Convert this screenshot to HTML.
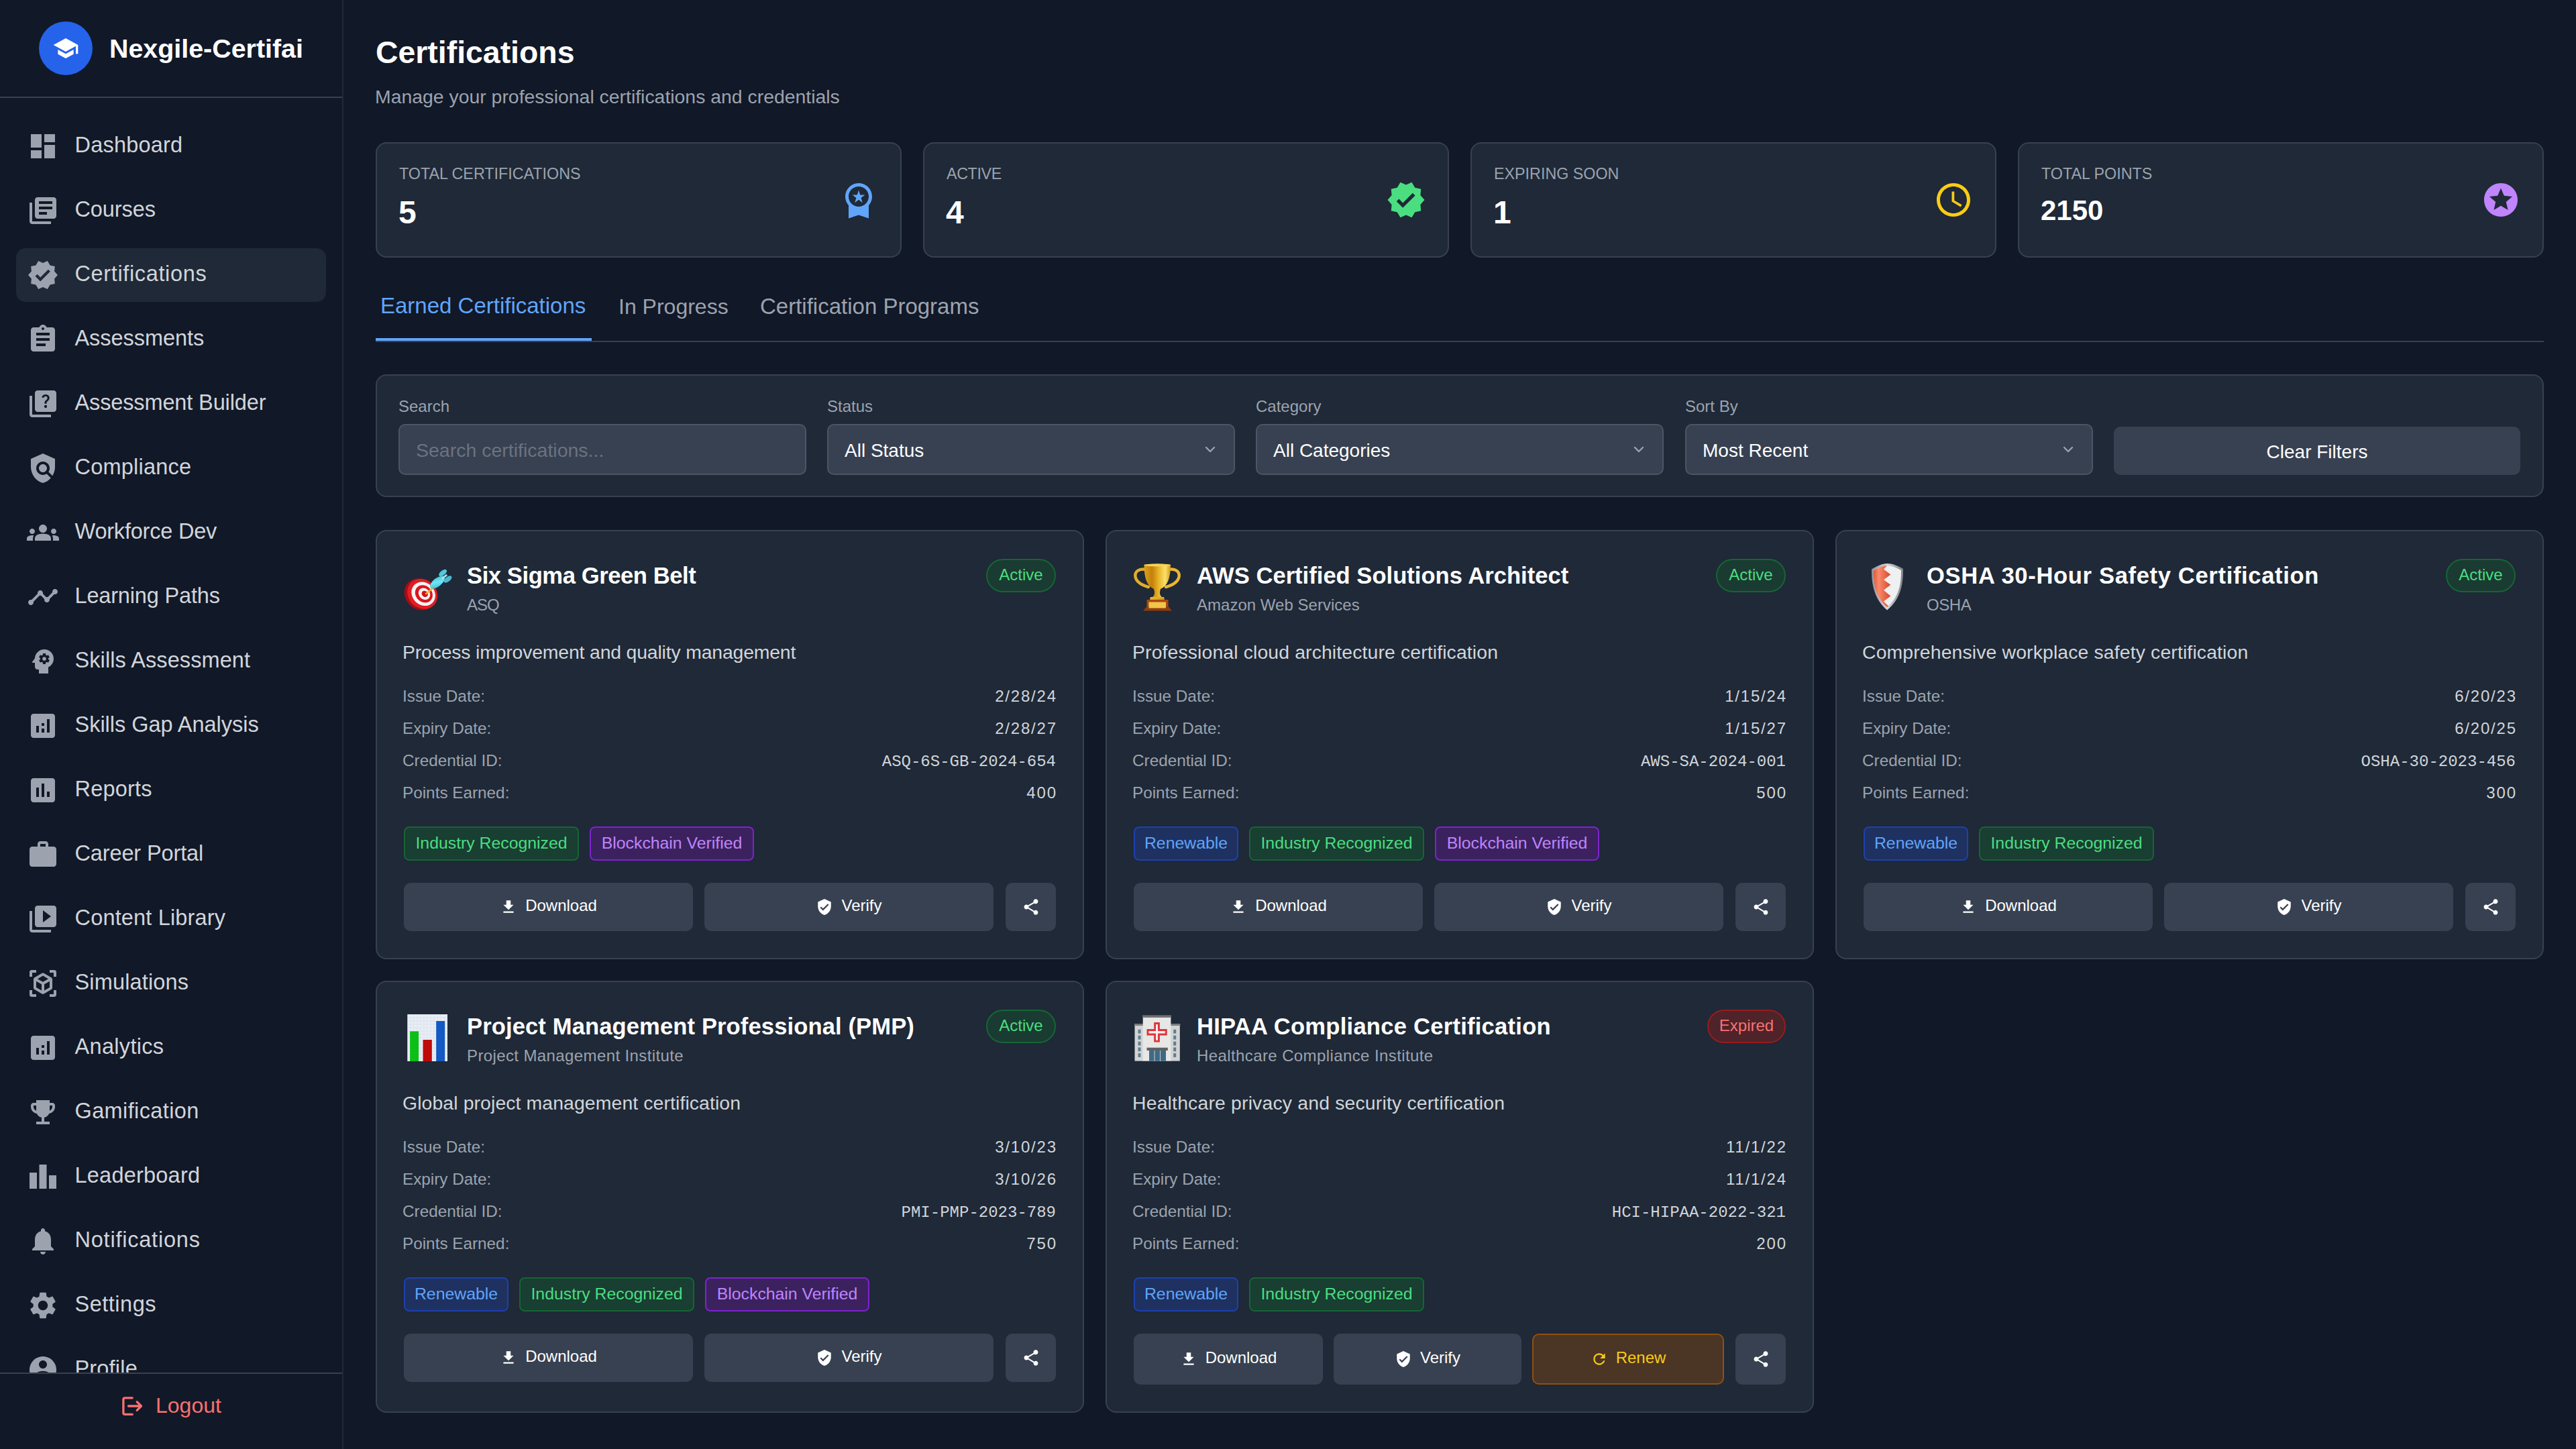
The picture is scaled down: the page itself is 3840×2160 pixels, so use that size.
<!DOCTYPE html>
<html><head><meta charset="utf-8"><title>Certifications</title>
<style>
html,body{margin:0;padding:0;width:3840px;height:2160px;overflow:hidden;background:#111827;}
body{position:relative;font-family:"Liberation Sans",sans-serif;}
.t{position:absolute;white-space:nowrap;}
.mono{font-family:"Liberation Mono",monospace;}
.b{position:absolute;box-sizing:content-box;}
.ic{position:absolute;display:block;}
</style></head><body>
<div class="b" style="left:0px;top:0px;width:510px;height:2160px;background:#111827;border-radius:0px;border-right:2px solid #1f2937;"></div>
<div class="b" style="left:0px;top:144px;width:510px;height:2px;background:#374151;border-radius:0px;"></div>
<div class="b" style="left:58px;top:32px;width:80px;height:80px;background:#2563eb;border-radius:40px;"></div>
<svg class="ic" style="left:78px;top:52px;width:40px;height:40px;" viewBox="0 0 24 24"><path fill="#ffffff" d="M5 13.18v4L12 21l7-3.82v-4L12 17l-7-3.82zM12 3L1 9l11 6 9-4.91V17h2V9L12 3z"/></svg>
<div class="t" style="left:163px;top:47.84px;font-size:39.4px;line-height:49px;color:#ffffff;font-weight:700;">Nexgile-Certifai</div>
<div class="b" style="left:0;top:146px;width:510px;height:1900px;overflow:hidden">
<svg class="ic" style="left:40px;top:48px;width:48px;height:48px;" viewBox="0 0 24 24"><path fill="#9ca3af" d="M3 13h8V3H3v10zm0 8h8v-6H3v6zm10 0h8V11h-8v10zm0-18v6h8V3h-8z"/></svg>
<div class="t" style="left:111.5px;top:50.23px;font-size:32.5px;line-height:41px;color:#d1d5db;letter-spacing:0.2px;">Dashboard</div>
<svg class="ic" style="left:40px;top:144px;width:48px;height:48px;" viewBox="0 0 24 24"><path fill="#9ca3af" d="M4 6H2v14c0 1.1.9 2 2 2h14v-2H4V6zm16-4H8c-1.1 0-2 .9-2 2v12c0 1.1.9 2 2 2h12c1.1 0 2-.9 2-2V4c0-1.1-.9-2-2-2zm-1 9H9V9h10v2zm-4 4H9v-2h6v2zm4-8H9V5h10v2z"/></svg>
<div class="t" style="left:111.5px;top:146.23px;font-size:32.5px;line-height:41px;color:#d1d5db;letter-spacing:-0.1px;">Courses</div>
<div class="b" style="left:24px;top:224px;width:462px;height:80px;background:#1f2937;border-radius:14px;"></div>
<svg class="ic" style="left:40px;top:240px;width:48px;height:48px;" viewBox="0 0 24 24"><path fill="#9ca3af" d="M23 12l-2.44-2.79.34-3.69-3.61-.82-1.89-3.2L12 2.96 8.6 1.5 6.71 4.69 3.1 5.5l.34 3.7L1 12l2.44 2.79-.34 3.7 3.61.82L8.6 22.5l3.4-1.47 3.4 1.46 1.89-3.19 3.61-.82-.34-3.69L23 12zm-12.91 4.72l-3.8-3.81 1.48-1.48 2.32 2.33 5.85-5.87 1.48 1.48-7.33 7.35z"/></svg>
<div class="t" style="left:111.5px;top:242.23px;font-size:32.5px;line-height:41px;color:#d1d5db;letter-spacing:0.64px;">Certifications</div>
<svg class="ic" style="left:40px;top:336px;width:48px;height:48px;" viewBox="0 0 24 24"><path fill="#9ca3af" d="M19 3h-4.18C14.4 1.84 13.3 1 12 1c-1.3 0-2.4.84-2.82 2H5c-1.1 0-2 .9-2 2v14c0 1.1.9 2 2 2h14c1.1 0 2-.9 2-2V5c0-1.1-.9-2-2-2zm-7 0c.55 0 1 .45 1 1s-.45 1-1 1-1-.45-1-1 .45-1 1-1zm2 14H7v-2h7v2zm3-4H7v-2h10v2zm0-4H7V7h10v2z"/></svg>
<div class="t" style="left:111.5px;top:338.23px;font-size:32.5px;line-height:41px;color:#d1d5db;letter-spacing:-0.06px;">Assessments</div>
<svg class="ic" style="left:40px;top:432px;width:48px;height:48px;" viewBox="0 0 24 24"><path fill="#9ca3af" d="M4 6H2v14c0 1.1.9 2 2 2h14v-2H4V6zm16-4H8c-1.1 0-2 .9-2 2v12c0 1.1.9 2 2 2h12c1.1 0 2-.9 2-2V4c0-1.1-.9-2-2-2zm-5.99 13c-.59 0-1.05-.47-1.05-1.05 0-.59.47-1.04 1.05-1.04.59 0 1.04.45 1.04 1.04-.01.58-.45 1.05-1.04 1.05zm2.5-6.17c-.63.93-1.23 1.21-1.56 1.81-.13.24-.18.4-.18 1.18h-1.52c0-.41-.06-1.08.26-1.65.41-.73 1.18-1.16 1.63-1.8.48-.68.21-1.94-1.14-1.94-.88 0-1.32.67-1.5 1.23l-1.37-.57C11.51 5.96 12.52 5 13.99 5c1.23 0 2.08.56 2.51 1.26.37.61.58 1.73.01 2.57z"/></svg>
<div class="t" style="left:111.5px;top:434.23px;font-size:32.5px;line-height:41px;color:#d1d5db;letter-spacing:-0.13px;">Assessment Builder</div>
<svg class="ic" style="left:40px;top:528px;width:48px;height:48px;" viewBox="0 0 24 24"><path fill="#9ca3af" d="M21 5l-9-4-9 4v6c0 5.55 3.84 10.74 9 12 2.3-.56 4.33-1.9 5.88-3.71l-3.12-3.12c-1.94 1.29-4.58 1.07-6.29-.64-1.95-1.95-1.95-5.12 0-7.07 1.95-1.95 5.12-1.95 7.07 0 1.71 1.71 1.92 4.35.64 6.29l2.9 2.9C20.29 15.69 21 13.38 21 11V5zM12 15c1.66 0 3-1.34 3-3s-1.34-3-3-3-3 1.34-3 3 1.34 3 3 3z"/></svg>
<div class="t" style="left:111.5px;top:530.23px;font-size:32.5px;line-height:41px;color:#d1d5db;letter-spacing:0.21px;">Compliance</div>
<svg class="ic" style="left:40px;top:624px;width:48px;height:48px;" viewBox="0 0 24 24"><path fill="#9ca3af" d="M12 12.75c1.63 0 3.07.39 4.24.9 1.08.48 1.76 1.56 1.76 2.73V18H6v-1.61c0-1.18.68-2.26 1.76-2.73 1.17-.52 2.61-.91 4.24-.91zM4 13c1.1 0 2-.9 2-2s-.9-2-2-2-2 .9-2 2 .9 2 2 2zm1.13 1.1c-.37-.06-.74-.1-1.13-.1-.99 0-1.93.21-2.78.58C.48 14.9 0 15.62 0 16.43V18h4.5v-1.61c0-.83.23-1.61.63-2.29zM20 13c1.1 0 2-.9 2-2s-.9-2-2-2-2 .9-2 2 .9 2 2 2zm4 3.43c0-.81-.48-1.53-1.22-1.85-.85-.37-1.79-.58-2.78-.58-.39 0-.76.04-1.13.1.4.68.63 1.46.63 2.29V18H24v-1.57zM12 6c1.66 0 3 1.34 3 3s-1.34 3-3 3-3-1.34-3-3 1.34-3 3-3z"/></svg>
<div class="t" style="left:111.5px;top:626.23px;font-size:32.5px;line-height:41px;color:#d1d5db;letter-spacing:-0.21px;">Workforce Dev</div>
<svg class="ic" style="left:40px;top:720px;width:48px;height:48px;" viewBox="0 0 24 24"><path fill="#9ca3af" d="M23 8c0 1.1-.9 2-2 2-.18 0-.35-.02-.51-.07l-3.56 3.55c.05.16.07.34.07.52 0 1.1-.9 2-2 2s-2-.9-2-2c0-.18.02-.36.07-.52l-2.55-2.55c-.16.05-.34.07-.52.07s-.36-.02-.52-.07l-4.55 4.56c.05.16.07.33.07.51 0 1.1-.9 2-2 2s-2-.9-2-2 .9-2 2-2c.18 0 .35.02.51.07l4.56-4.55C8.02 9.36 8 9.18 8 9c0-1.1.9-2 2-2s2 .9 2 2c0 .18-.02.36-.07.52l2.55 2.55c.16-.05.34-.07.52-.07s.36.02.52.07l3.55-3.56C19.02 8.35 19 8.18 19 8c0-1.1.9-2 2-2s2 .9 2 2z"/></svg>
<div class="t" style="left:111.5px;top:722.23px;font-size:32.5px;line-height:41px;color:#d1d5db;letter-spacing:-0.17px;">Learning Paths</div>
<svg class="ic" style="left:40px;top:816px;width:48px;height:48px;" viewBox="0 0 24 24"><path fill="#9ca3af" d="M13 3C9.23 3 6.19 5.95 6 9.66l-1.92 2.53c-.24.31 0 .81.42.81H6v3c0 1.11.89 2 2 2h1v3h7v-4.69c2.37-1.12 4-3.51 4-6.31 0-3.86-3.12-7-7-7zm3 7c0 .13-.01.26-.02.39l.83.66c.08.06.1.16.05.25l-.8 1.39c-.05.09-.16.12-.24.09l-.99-.4c-.21.16-.43.29-.67.39L14 13.83c-.01.1-.1.17-.2.17h-1.6c-.1 0-.18-.07-.2-.17l-.15-1.06c-.25-.1-.47-.23-.68-.39l-.99.4c-.09.03-.2 0-.25-.09l-.8-1.39c-.05-.08-.03-.19.05-.25l.84-.66c-.01-.13-.02-.26-.02-.39s.02-.27.04-.39l-.85-.66c-.08-.06-.1-.16-.05-.26l.8-1.38c.05-.09.15-.12.24-.09l1 .4c.2-.15.43-.29.67-.39L12 6.17c.02-.1.1-.17.2-.17h1.6c.1 0 .18.07.2.17l.15 1.06c.24.1.46.23.67.39l1-.4c.09-.03.2 0 .24.09l.8 1.38c.05.09.03.2-.05.26l-.85.66c.03.12.04.25.04.39zm-3-1.43c-.79 0-1.43.64-1.43 1.43s.64 1.43 1.43 1.43 1.43-.64 1.43-1.43-.64-1.43-1.43-1.43z"/></svg>
<div class="t" style="left:111.5px;top:818.23px;font-size:32.5px;line-height:41px;color:#d1d5db;letter-spacing:0.09px;">Skills Assessment</div>
<svg class="ic" style="left:40px;top:912px;width:48px;height:48px;" viewBox="0 0 24 24"><path fill="#9ca3af" d="M19 3H5c-1.1 0-2 .9-2 2v14c0 1.1.9 2 2 2h14c1.1 0 2-.9 2-2V5c0-1.1-.9-2-2-2zM9 17H7v-5h2v5zm4 0h-2v-3h2v3zm0-5h-2v-2h2v2zm4 5h-2V7h2v10z"/></svg>
<div class="t" style="left:111.5px;top:914.23px;font-size:32.5px;line-height:41px;color:#d1d5db;letter-spacing:-0.02px;">Skills Gap Analysis</div>
<svg class="ic" style="left:40px;top:1008px;width:48px;height:48px;" viewBox="0 0 24 24"><path fill="#9ca3af" d="M19 3H5c-1.1 0-2 .9-2 2v14c0 1.1.9 2 2 2h14c1.1 0 2-.9 2-2V5c0-1.1-.9-2-2-2zM9 17H7v-7h2v7zm4 0h-2V7h2v10zm4 0h-2v-4h2v4z"/></svg>
<div class="t" style="left:111.5px;top:1010.23px;font-size:32.5px;line-height:41px;color:#d1d5db;letter-spacing:0.22px;">Reports</div>
<svg class="ic" style="left:40px;top:1104px;width:48px;height:48px;" viewBox="0 0 24 24"><path fill="#9ca3af" d="M20 6h-4V4c0-1.11-.89-2-2-2h-4c-1.11 0-2 .89-2 2v2H4c-1.11 0-1.99.89-1.99 2L2 19c0 1.11.89 2 2 2h16c1.11 0 2-.89 2-2V8c0-1.11-.89-2-2-2zm-6 0h-4V4h4v2z"/></svg>
<div class="t" style="left:111.5px;top:1106.23px;font-size:32.5px;line-height:41px;color:#d1d5db;letter-spacing:-0.13px;">Career Portal</div>
<svg class="ic" style="left:40px;top:1200px;width:48px;height:48px;" viewBox="0 0 24 24"><path fill="#9ca3af" d="M4 6H2v14c0 1.1.9 2 2 2h14v-2H4V6zm16-4H8c-1.1 0-2 .9-2 2v12c0 1.1.9 2 2 2h12c1.1 0 2-.9 2-2V4c0-1.1-.9-2-2-2zm-8 12.5v-9l6 4.5-6 4.5z"/></svg>
<div class="t" style="left:111.5px;top:1202.23px;font-size:32.5px;line-height:41px;color:#d1d5db;letter-spacing:0.17px;">Content Library</div>
<svg class="ic" style="left:40px;top:1296px;width:48px;height:48px;" viewBox="0 0 24 24"><path fill="#9ca3af" d="M18.25 7.6l-5.5-3.18c-.46-.27-1.04-.27-1.5 0L5.75 7.6c-.46.27-.75.76-.75 1.3v6.35c0 .54.29 1.03.75 1.3l5.5 3.18c.46.27 1.04.27 1.5 0l5.5-3.18c.46-.27.75-.76.75-1.3V8.9c0-.54-.29-1.03-.75-1.3zM7 14.96v-4.62l4 2.32v4.61l-4-2.31zm5-4.03L8 8.61l4-2.31 4 2.31-4 2.32zm1 6.34v-4.61l4-2.32v4.62l-4 2.31zM7 2H3.5C2.67 2 2 2.67 2 3.5V7h2V4h3V2zm10 0h3.5c.83 0 1.5.67 1.5 1.5V7h-2V4h-3V2zM7 22H3.5c-.83 0-1.5-.67-1.5-1.5V17h2v3h3v2zm10 0h3.5c.83 0 1.5-.67 1.5-1.5V17h-2v3h-3v2z"/></svg>
<div class="t" style="left:111.5px;top:1298.23px;font-size:32.5px;line-height:41px;color:#d1d5db;letter-spacing:0.16px;">Simulations</div>
<svg class="ic" style="left:40px;top:1392px;width:48px;height:48px;" viewBox="0 0 24 24"><path fill="#9ca3af" d="M19 3H5c-1.1 0-2 .9-2 2v14c0 1.1.9 2 2 2h14c1.1 0 2-.9 2-2V5c0-1.1-.9-2-2-2zM9 17H7v-5h2v5zm4 0h-2v-3h2v3zm0-5h-2v-2h2v2zm4 5h-2V7h2v10z"/></svg>
<div class="t" style="left:111.5px;top:1394.23px;font-size:32.5px;line-height:41px;color:#d1d5db;letter-spacing:0.32px;">Analytics</div>
<svg class="ic" style="left:40px;top:1488px;width:48px;height:48px;" viewBox="0 0 24 24"><path fill="#9ca3af" d="M19 5h-2V3H7v2H5c-1.1 0-2 .9-2 2v1c0 2.55 1.92 4.63 4.39 4.94.63 1.5 1.98 2.63 3.61 2.96V19H7v2h10v-2h-4v-3.1c1.63-.33 2.98-1.46 3.61-2.96C19.08 12.63 21 10.55 21 8V7c0-1.1-.9-2-2-2zM5 8V7h2v3.82C5.84 10.4 5 9.3 5 8zm14 0c0 1.3-.84 2.4-2 2.82V7h2v1z"/></svg>
<div class="t" style="left:111.5px;top:1490.23px;font-size:32.5px;line-height:41px;color:#d1d5db;letter-spacing:0.38px;">Gamification</div>
<svg class="ic" style="left:40px;top:1584px;width:48px;height:48px;" viewBox="0 0 24 24"><path fill="#9ca3af" d="M7.5 21H2V9h5.5v12zm7.25-18h-5.5v18h5.5V3zM22 11h-5.5v10H22V11z"/></svg>
<div class="t" style="left:111.5px;top:1586.23px;font-size:32.5px;line-height:41px;color:#d1d5db;letter-spacing:0.22px;">Leaderboard</div>
<svg class="ic" style="left:40px;top:1680px;width:48px;height:48px;" viewBox="0 0 24 24"><path fill="#9ca3af" d="M12 22c1.1 0 2-.9 2-2h-4c0 1.1.89 2 2 2zm6-6v-5c0-3.07-1.64-5.64-4.5-6.32V4c0-.83-.67-1.5-1.5-1.5s-1.5.67-1.5 1.5v.68C7.63 5.36 6 7.92 6 11v5l-2 2v1h16v-1l-2-2z"/></svg>
<div class="t" style="left:111.5px;top:1682.23px;font-size:32.5px;line-height:41px;color:#d1d5db;letter-spacing:0.78px;">Notifications</div>
<svg class="ic" style="left:40px;top:1776px;width:48px;height:48px;" viewBox="0 0 24 24"><path fill="#9ca3af" d="M19.14 12.94c.04-.3.06-.61.06-.94 0-.32-.02-.64-.07-.94l2.03-1.58c.18-.14.23-.41.12-.61l-1.92-3.32c-.12-.22-.37-.29-.59-.22l-2.39.96c-.5-.38-1.03-.7-1.62-.94l-.36-2.54c-.04-.24-.24-.41-.48-.41h-3.84c-.24 0-.43.17-.47.41l-.36 2.54c-.59.24-1.13.57-1.62.94l-2.39-.96c-.22-.08-.47 0-.59.22L2.74 8.87c-.12.21-.08.47.12.61l2.03 1.58c-.05.3-.09.63-.09.94s.02.64.07.94l-2.03 1.58c-.18.14-.23.41-.12.61l1.92 3.32c.12.22.37.29.59.22l2.39-.96c.5.38 1.03.7 1.62.94l.36 2.54c.05.24.24.41.48.41h3.84c.24 0 .44-.17.47-.41l.36-2.54c.59-.24 1.13-.56 1.62-.94l2.39.96c.22.08.47 0 .59-.22l1.92-3.32c.12-.22.07-.47-.12-.61l-2.01-1.58zM12 15.6c-1.98 0-3.6-1.62-3.6-3.6s1.62-3.6 3.6-3.6 3.6 1.62 3.6 3.6-1.62 3.6-3.6 3.6z"/></svg>
<div class="t" style="left:111.5px;top:1778.23px;font-size:32.5px;line-height:41px;color:#d1d5db;letter-spacing:0.51px;">Settings</div>
<svg class="ic" style="left:40px;top:1872px;width:48px;height:48px;" viewBox="0 0 24 24"><path fill="#9ca3af" d="M12 2C6.48 2 2 6.48 2 12s4.48 10 10 10 10-4.48 10-10S17.52 2 12 2zm0 3c1.66 0 3 1.34 3 3s-1.34 3-3 3-3-1.34-3-3 1.34-3 3-3zm0 14.2c-2.5 0-4.71-1.28-6-3.22.03-1.99 4-3.08 6-3.08 1.99 0 5.97 1.09 6 3.08-1.29 1.94-3.5 3.22-6 3.22z"/></svg>
<div class="t" style="left:111.5px;top:1874.23px;font-size:32.5px;line-height:41px;color:#d1d5db;letter-spacing:0.18px;">Profile</div>
</div>
<div class="b" style="left:0px;top:2046px;width:510px;height:2px;background:#374151;border-radius:0px;"></div>
<svg class="ic" style="left:170px;top:2070px;width:60px;height:60px" viewBox="170 2070 60 60"><path fill="none" stroke="#f87171" stroke-width="3.3" stroke-linecap="round" stroke-linejoin="round" d="M197.2 2083.8H186.2Q183.9 2083.8 183.9 2086.1V2106.1Q183.9 2108.4 186.2 2108.4H197.2M191.5 2096H210.5M204.2 2089.7L210.5 2096L204.2 2102.3"/></svg>
<div class="t" style="left:232px;top:2074.91px;font-size:32px;line-height:40px;color:#f87171;">Logout</div>
<div class="t" style="left:560px;top:48.91px;font-size:46.4px;line-height:58px;color:#ffffff;font-weight:700;">Certifications</div>
<div class="t" style="left:559px;top:126.15px;font-size:28.4px;line-height:36px;color:#9ca3af;">Manage your professional certifications and credentials</div>
<div class="b" style="left:560px;top:212px;width:780px;height:168px;background:#1f2937;border:2px solid #374151;border-radius:16px;"></div>
<div class="t" style="left:595px;top:245.42px;font-size:23.3px;line-height:29px;color:#9ca3af;">TOTAL CERTIFICATIONS</div>
<div class="t" style="left:594px;top:287.36px;font-size:48px;line-height:60px;color:#ffffff;font-weight:700;">5</div>
<svg class="ic" style="left:1250px;top:268px;width:60px;height:60px;" viewBox="0 0 24 24"><path fill="#60a5fa" d="M9.68 13.69L12 11.93l2.31 1.76-.88-2.85L15.75 9h-2.84L12 6.19 11.09 9H8.25l2.31 1.84-.88 2.85zM20 10c0-4.42-3.58-8-8-8s-8 3.58-8 8c0 2.03.76 3.87 2 5.28V23l6-2 6 2v-7.72c1.24-1.41 2-3.25 2-5.28zm-8-6c3.31 0 6 2.69 6 6s-2.69 6-6 6-6-2.69-6-6 2.69-6 6-6z"/></svg>
<div class="b" style="left:1376px;top:212px;width:780px;height:168px;background:#1f2937;border:2px solid #374151;border-radius:16px;"></div>
<div class="t" style="left:1411px;top:245.42px;font-size:23.3px;line-height:29px;color:#9ca3af;letter-spacing:-0.38px;">ACTIVE</div>
<div class="t" style="left:1410px;top:287.36px;font-size:48px;line-height:60px;color:#ffffff;font-weight:700;">4</div>
<svg class="ic" style="left:2066px;top:268px;width:60px;height:60px;" viewBox="0 0 24 24"><path fill="#4ade80" d="M23 12l-2.44-2.79.34-3.69-3.61-.82-1.89-3.2L12 2.96 8.6 1.5 6.71 4.69 3.1 5.5l.34 3.7L1 12l2.44 2.79-.34 3.7 3.61.82L8.6 22.5l3.4-1.47 3.4 1.46 1.89-3.19 3.61-.82-.34-3.69L23 12zm-12.91 4.72l-3.8-3.81 1.48-1.48 2.32 2.33 5.85-5.87 1.48 1.48-7.33 7.35z"/></svg>
<div class="b" style="left:2192px;top:212px;width:780px;height:168px;background:#1f2937;border:2px solid #374151;border-radius:16px;"></div>
<div class="t" style="left:2227px;top:245.42px;font-size:23.3px;line-height:29px;color:#9ca3af;">EXPIRING SOON</div>
<div class="t" style="left:2226px;top:287.36px;font-size:48px;line-height:60px;color:#ffffff;font-weight:700;">1</div>
<svg class="ic" style="left:2882px;top:268px;width:60px;height:60px;" viewBox="0 0 24 24"><path fill="#facc15" d="M11.99 2C6.47 2 2 6.48 2 12s4.47 10 9.99 10C17.52 22 22 17.52 22 12S17.52 2 11.99 2zM12 20c-4.42 0-8-3.58-8-8s3.58-8 8-8 8 3.58 8 8-3.58 8-8 8zm.5-13H11v6l5.25 3.15.75-1.23-4.5-2.67z"/></svg>
<div class="b" style="left:3008px;top:212px;width:780px;height:168px;background:#1f2937;border:2px solid #374151;border-radius:16px;"></div>
<div class="t" style="left:3043px;top:245.42px;font-size:23.3px;line-height:29px;color:#9ca3af;">TOTAL POINTS</div>
<div class="t" style="left:3042px;top:287.94px;font-size:42px;line-height:52px;color:#ffffff;font-weight:700;">2150</div>
<svg class="ic" style="left:3698px;top:268px;width:60px;height:60px;" viewBox="0 0 24 24"><path fill="#c084fc" d="M11.99 2C6.47 2 2 6.48 2 12s4.47 10 9.99 10C17.52 22 22 17.52 22 12S17.52 2 11.99 2zm4.24 16L12 15.45 7.77 18l1.12-4.81-3.73-3.23 4.92-.42L12 5l1.92 4.53 4.92.42-3.73 3.23L16.23 18z"/></svg>
<div class="t" style="left:567px;top:435.06px;font-size:33px;line-height:41px;color:#60a5fa;font-weight:500;">Earned Certifications</div>
<div class="t" style="left:922px;top:436.91px;font-size:32px;line-height:40px;color:#9ca3af;">In Progress</div>
<div class="t" style="left:1133px;top:436.06px;font-size:33px;line-height:41px;color:#9ca3af;">Certification Programs</div>
<div class="b" style="left:560px;top:508px;width:3232px;height:2px;background:#374151;border-radius:0px;"></div>
<div class="b" style="left:560px;top:504px;width:322px;height:4px;background:#60a5fa;border-radius:0px;"></div>
<div class="b" style="left:560px;top:558px;width:3228px;height:179px;background:#1f2937;border:2px solid #374151;border-radius:16px;"></div>
<div class="t" style="left:594px;top:590.68px;font-size:24px;line-height:30px;color:#9ca3af;">Search</div>
<div class="b" style="left:594px;top:632px;width:604px;height:72px;background:#374151;border:2px solid #4b5563;border-radius:10px;"></div>
<div class="t" style="left:620px;top:653.12px;font-size:28.5px;line-height:36px;color:#6b7280;">Search certifications...</div>
<div class="t" style="left:1233px;top:590.68px;font-size:24px;line-height:30px;color:#9ca3af;">Status</div>
<div class="b" style="left:1233px;top:632px;width:604px;height:72px;background:#374151;border:2px solid #4b5563;border-radius:10px;"></div>
<div class="t" style="left:1259px;top:653.79px;font-size:28px;line-height:35px;color:#ffffff;">All Status</div>
<svg class="ic" style="left:1792px;top:658px;width:24px;height:24px" viewBox="0 0 24 24"><path fill="none" stroke="#9ca3af" stroke-width="2.4" stroke-linecap="round" stroke-linejoin="round" d="M6 9l6 6 6-6"/></svg>
<div class="t" style="left:1872px;top:590.68px;font-size:24px;line-height:30px;color:#9ca3af;">Category</div>
<div class="b" style="left:1872px;top:632px;width:604px;height:72px;background:#374151;border:2px solid #4b5563;border-radius:10px;"></div>
<div class="t" style="left:1898px;top:653.79px;font-size:28px;line-height:35px;color:#ffffff;">All Categories</div>
<svg class="ic" style="left:2431px;top:658px;width:24px;height:24px" viewBox="0 0 24 24"><path fill="none" stroke="#9ca3af" stroke-width="2.4" stroke-linecap="round" stroke-linejoin="round" d="M6 9l6 6 6-6"/></svg>
<div class="t" style="left:2512px;top:590.68px;font-size:24px;line-height:30px;color:#9ca3af;">Sort By</div>
<div class="b" style="left:2512px;top:632px;width:604px;height:72px;background:#374151;border:2px solid #4b5563;border-radius:10px;"></div>
<div class="t" style="left:2538px;top:653.79px;font-size:28px;line-height:35px;color:#ffffff;">Most Recent</div>
<svg class="ic" style="left:3071px;top:658px;width:24px;height:24px" viewBox="0 0 24 24"><path fill="none" stroke="#9ca3af" stroke-width="2.4" stroke-linecap="round" stroke-linejoin="round" d="M6 9l6 6 6-6"/></svg>
<div class="b" style="left:3151px;top:636px;width:606px;height:72px;background:#374151;border-radius:10px;"></div>
<div class="t" style="left:3454px;transform:translateX(-50%);top:655.79px;font-size:28px;line-height:35px;color:#ffffff;">Clear Filters</div>
<div class="b" style="left:560px;top:790px;width:1052px;height:636px;background:#1f2937;border:2px solid #374151;border-radius:16px;"></div>
<svg class="ic" style="left:602px;top:840px;width:70px;height:70px;overflow:visible" viewBox="0 0 70 70">
<defs><linearGradient id="dartg" x1="0" y1="1" x2="1" y2="0"><stop offset="0" stop-color="#2fb4d8"/><stop offset="0.5" stop-color="#6ee6f5"/><stop offset="1" stop-color="#3fb7cf"/></linearGradient></defs>
<g transform="rotate(45 27 46)">
<ellipse cx="25" cy="48" rx="25" ry="22" fill="#a30d17"/>
<ellipse cx="27" cy="45" rx="24" ry="21" fill="#e11d24"/>
<ellipse cx="28" cy="44" rx="19" ry="16.5" fill="#f6f3f3"/>
<ellipse cx="28.5" cy="43.5" rx="14" ry="12" fill="#d9161e"/>
<ellipse cx="29" cy="43" rx="9.5" ry="8" fill="#f6f3f3"/>
<ellipse cx="29.5" cy="42.5" rx="5" ry="4.3" fill="#d10f18"/>
</g>
<path d="M33 45 L43 37" stroke="#f4b02a" stroke-width="2.6" stroke-linecap="round"/>
<g transform="rotate(-38 50 28)">
<ellipse cx="50" cy="28" rx="13" ry="6.2" fill="url(#dartg)"/>
<ellipse cx="65" cy="22" rx="7" ry="3.6" fill="#55c6dc"/>
<ellipse cx="65" cy="34" rx="7" ry="3.6" fill="#4ab8cf"/>
<rect x="58" y="26.5" width="10" height="3" fill="#9fe3ee"/>
</g>
</svg>
<div class="t" style="left:696px;top:836.50px;font-size:34.6px;line-height:43px;color:#ffffff;font-weight:700;letter-spacing:-0.42px;">Six Sigma Green Belt</div>
<div class="t" style="left:696px;top:886.68px;font-size:24px;line-height:30px;color:#9ca3af;letter-spacing:-1.0px;">ASQ</div>
<div class="b" style="left:1470px;top:833px;width:100px;height:46px;background:rgba(20,83,45,0.45);border:2px solid #166534;border-radius:25px;"></div>
<div class="t" style="left:1522px;transform:translateX(-50%);top:841.68px;font-size:24px;line-height:30px;color:#4ade80;">Active</div>
<div class="t" style="left:600px;top:954.15px;font-size:28.4px;line-height:36px;color:#d1d5db;letter-spacing:-0.17px;">Process improvement and quality management</div>
<div class="t" style="left:600px;top:1022.58px;font-size:24.3px;line-height:30px;color:#9ca3af;">Issue Date:</div>
<div class="t" style="right:2264.2px;top:1022.68px;font-size:24px;line-height:30px;color:#d1d5db;letter-spacing:1.8px;">2/28/24</div>
<div class="t" style="left:600px;top:1070.58px;font-size:24.3px;line-height:30px;color:#9ca3af;">Expiry Date:</div>
<div class="t" style="right:2264.2px;top:1070.68px;font-size:24px;line-height:30px;color:#d1d5db;letter-spacing:1.8px;">2/28/27</div>
<div class="t" style="left:600px;top:1118.58px;font-size:24.3px;line-height:30px;color:#9ca3af;">Credential ID:</div>
<div class="t mono" style="right:2266px;top:1120.61px;font-size:24px;line-height:30px;color:#d1d5db;">ASQ-6S-GB-2024-654</div>
<div class="t" style="left:600px;top:1166.58px;font-size:24.3px;line-height:30px;color:#9ca3af;">Points Earned:</div>
<div class="t" style="right:2264.2px;top:1166.68px;font-size:24px;line-height:30px;color:#d1d5db;letter-spacing:1.8px;">400</div>
<div class="b" style="left:602px;top:1232px;width:257px;height:47px;background:rgba(20,83,45,0.5);border:2px solid #166534;border-radius:8px;"></div>
<div class="t" style="left:732.5px;transform:translateX(-50%);top:1240.90px;font-size:24.8px;line-height:31px;color:#4ade80;">Industry Recognized</div>
<div class="b" style="left:879px;top:1232px;width:241px;height:47px;background:rgba(88,28,135,0.5);border:2px solid #7e22ce;border-radius:8px;"></div>
<div class="t" style="left:1001.5px;transform:translateX(-50%);top:1240.90px;font-size:24.8px;line-height:31px;color:#c084fc;">Blockchain Verified</div>
<div class="b" style="left:602px;top:1316px;width:431px;height:72px;background:#374151;border-radius:10px;"></div>
<svg class="ic" style="left:745.1484375px;top:1339.0px;width:26px;height:26px;" viewBox="0 0 24 24"><path fill="#ffffff" d="M5 20h14v-2H5v2zM19 9h-4V3H9v6H5l7 7 7-7z"/></svg>
<div class="t" style="left:783.1484375px;top:1334.68px;font-size:24px;line-height:30px;color:#ffffff;">Download</div>
<div class="b" style="left:1050px;top:1316px;width:431px;height:72px;background:#374151;border-radius:10px;"></div>
<svg class="ic" style="left:1216.484375px;top:1339.0px;width:26px;height:26px;" viewBox="0 0 24 24"><path fill="#ffffff" d="M12 1L3 5v6c0 5.55 3.84 10.74 9 12 5.16-1.26 9-6.45 9-12V5l-9-4zm-2 16l-4-4 1.41-1.41L10 14.17l6.59-6.59L18 9l-8 8z"/></svg>
<div class="t" style="left:1254.484375px;top:1334.68px;font-size:24px;line-height:30px;color:#ffffff;">Verify</div>
<div class="b" style="left:1499px;top:1316px;width:75px;height:72px;background:#374151;border-radius:10px;"></div>
<svg class="ic" style="left:1522.5px;top:1338.0px;width:28px;height:28px;" viewBox="0 0 24 24"><path fill="#ffffff" d="M18 16.08c-.76 0-1.44.3-1.96.77L8.91 12.7c.05-.23.09-.46.09-.7s-.04-.47-.09-.7l7.05-4.11c.54.5 1.25.81 2.04.81 1.66 0 3-1.34 3-3s-1.34-3-3-3-3 1.34-3 3c0 .24.04.47.09.7L8.04 9.81C7.5 9.31 6.79 9 6 9c-1.66 0-3 1.34-3 3s1.34 3 3 3c.79 0 1.5-.31 2.04-.81l7.12 4.16c-.05.21-.08.43-.08.65 0 1.61 1.31 2.92 2.92 2.92 1.61 0 2.92-1.31 2.92-2.92s-1.31-2.92-2.92-2.92z"/></svg>
<div class="b" style="left:1648px;top:790px;width:1052px;height:636px;background:#1f2937;border:2px solid #374151;border-radius:16px;"></div>
<svg class="ic" style="left:1690px;top:840px;width:70px;height:70px;overflow:visible" viewBox="0 0 70 70">
<defs><linearGradient id="gold" x1="0" y1="0" x2="1" y2="0"><stop offset="0" stop-color="#d9a21e"/><stop offset="0.3" stop-color="#c47f0a"/><stop offset="0.55" stop-color="#e8b52a"/><stop offset="0.8" stop-color="#fbe06a"/><stop offset="1" stop-color="#d39a14"/></linearGradient>
<linearGradient id="gold2" x1="0" y1="0" x2="1" y2="1"><stop offset="0" stop-color="#f0c23a"/><stop offset="1" stop-color="#c98d12"/></linearGradient></defs>
<path d="M18 9 C8 7 1 12 2.5 20 C4 27 11 32 22 35" fill="none" stroke="#e2ac2a" stroke-width="4.5" stroke-linecap="round"/>
<path d="M52 9 C62 7 69 12 67.5 20 C66 27 59 32 48 35" fill="none" stroke="#e9b630" stroke-width="4.5" stroke-linecap="round"/>
<path d="M15.5 1.5 H55 C55 22 50 34 40 38 L39 42 C38.5 47 41 50 45 52 H25 C29 50 31.5 47 31 42 L30 38 C20 34 15.5 22 15.5 1.5 Z" fill="url(#gold)"/>
<ellipse cx="35.3" cy="2.3" rx="19.8" ry="2" fill="#f7d455"/>
<path d="M25 50 H45 C46 52 46 54 45 55 H25 C24 54 24 52 25 50Z" fill="url(#gold2)"/>
<rect x="19.5" y="54" width="32" height="12" fill="#a54a12"/>
<path d="M19.5 64 H51.5 L57 70.5 H14 Z" fill="#8f3d0c"/>
<rect x="22.5" y="57.5" width="25.5" height="9" fill="#f2c54a"/>
</svg>
<div class="t" style="left:1784px;top:836.50px;font-size:34.6px;line-height:43px;color:#ffffff;font-weight:700;letter-spacing:0.01px;">AWS Certified Solutions Architect</div>
<div class="t" style="left:1784px;top:886.68px;font-size:24px;line-height:30px;color:#9ca3af;letter-spacing:0.02px;">Amazon Web Services</div>
<div class="b" style="left:2558px;top:833px;width:100px;height:46px;background:rgba(20,83,45,0.45);border:2px solid #166534;border-radius:25px;"></div>
<div class="t" style="left:2610px;transform:translateX(-50%);top:841.68px;font-size:24px;line-height:30px;color:#4ade80;">Active</div>
<div class="t" style="left:1688px;top:954.15px;font-size:28.4px;line-height:36px;color:#d1d5db;letter-spacing:0.12px;">Professional cloud architecture certification</div>
<div class="t" style="left:1688px;top:1022.58px;font-size:24.3px;line-height:30px;color:#9ca3af;">Issue Date:</div>
<div class="t" style="right:1176.1999999999998px;top:1022.68px;font-size:24px;line-height:30px;color:#d1d5db;letter-spacing:1.8px;">1/15/24</div>
<div class="t" style="left:1688px;top:1070.58px;font-size:24.3px;line-height:30px;color:#9ca3af;">Expiry Date:</div>
<div class="t" style="right:1176.1999999999998px;top:1070.68px;font-size:24px;line-height:30px;color:#d1d5db;letter-spacing:1.8px;">1/15/27</div>
<div class="t" style="left:1688px;top:1118.58px;font-size:24.3px;line-height:30px;color:#9ca3af;">Credential ID:</div>
<div class="t mono" style="right:1178px;top:1120.61px;font-size:24px;line-height:30px;color:#d1d5db;">AWS-SA-2024-001</div>
<div class="t" style="left:1688px;top:1166.58px;font-size:24.3px;line-height:30px;color:#9ca3af;">Points Earned:</div>
<div class="t" style="right:1176.1999999999998px;top:1166.68px;font-size:24px;line-height:30px;color:#d1d5db;letter-spacing:1.8px;">500</div>
<div class="b" style="left:1690px;top:1232px;width:152px;height:47px;background:rgba(30,58,138,0.5);border:2px solid #1e40af;border-radius:8px;"></div>
<div class="t" style="left:1768.0px;transform:translateX(-50%);top:1240.90px;font-size:24.8px;line-height:31px;color:#60a5fa;">Renewable</div>
<div class="b" style="left:1862px;top:1232px;width:257px;height:47px;background:rgba(20,83,45,0.5);border:2px solid #166534;border-radius:8px;"></div>
<div class="t" style="left:1992.5px;transform:translateX(-50%);top:1240.90px;font-size:24.8px;line-height:31px;color:#4ade80;">Industry Recognized</div>
<div class="b" style="left:2139px;top:1232px;width:241px;height:47px;background:rgba(88,28,135,0.5);border:2px solid #7e22ce;border-radius:8px;"></div>
<div class="t" style="left:2261.5px;transform:translateX(-50%);top:1240.90px;font-size:24.8px;line-height:31px;color:#c084fc;">Blockchain Verified</div>
<div class="b" style="left:1690px;top:1316px;width:431px;height:72px;background:#374151;border-radius:10px;"></div>
<svg class="ic" style="left:1833.1484375px;top:1339.0px;width:26px;height:26px;" viewBox="0 0 24 24"><path fill="#ffffff" d="M5 20h14v-2H5v2zM19 9h-4V3H9v6H5l7 7 7-7z"/></svg>
<div class="t" style="left:1871.1484375px;top:1334.68px;font-size:24px;line-height:30px;color:#ffffff;">Download</div>
<div class="b" style="left:2138px;top:1316px;width:431px;height:72px;background:#374151;border-radius:10px;"></div>
<svg class="ic" style="left:2304.484375px;top:1339.0px;width:26px;height:26px;" viewBox="0 0 24 24"><path fill="#ffffff" d="M12 1L3 5v6c0 5.55 3.84 10.74 9 12 5.16-1.26 9-6.45 9-12V5l-9-4zm-2 16l-4-4 1.41-1.41L10 14.17l6.59-6.59L18 9l-8 8z"/></svg>
<div class="t" style="left:2342.484375px;top:1334.68px;font-size:24px;line-height:30px;color:#ffffff;">Verify</div>
<div class="b" style="left:2587px;top:1316px;width:75px;height:72px;background:#374151;border-radius:10px;"></div>
<svg class="ic" style="left:2610.5px;top:1338.0px;width:28px;height:28px;" viewBox="0 0 24 24"><path fill="#ffffff" d="M18 16.08c-.76 0-1.44.3-1.96.77L8.91 12.7c.05-.23.09-.46.09-.7s-.04-.47-.09-.7l7.05-4.11c.54.5 1.25.81 2.04.81 1.66 0 3-1.34 3-3s-1.34-3-3-3-3 1.34-3 3c0 .24.04.47.09.7L8.04 9.81C7.5 9.31 6.79 9 6 9c-1.66 0-3 1.34-3 3s1.34 3 3 3c.79 0 1.5-.31 2.04-.81l7.12 4.16c-.05.21-.08.43-.08.65 0 1.61 1.31 2.92 2.92 2.92 1.61 0 2.92-1.31 2.92-2.92s-1.31-2.92-2.92-2.92z"/></svg>
<div class="b" style="left:2736px;top:790px;width:1052px;height:636px;background:#1f2937;border:2px solid #374151;border-radius:16px;"></div>
<svg class="ic" style="left:2778px;top:840px;width:70px;height:70px;overflow:visible" viewBox="0 0 70 70">
<defs><linearGradient id="silv" x1="0" y1="0" x2="1" y2="0"><stop offset="0" stop-color="#8c9096"/><stop offset="0.5" stop-color="#d4d7da"/><stop offset="1" stop-color="#7d8186"/></linearGradient>
<linearGradient id="redg" x1="0" y1="0" x2="1" y2="0"><stop offset="0" stop-color="#e2573a"/><stop offset="0.3" stop-color="#f98a6c"/><stop offset="1" stop-color="#d9482a"/></linearGradient></defs>
<path d="M12 8.5 C20 4 28 0 35 0 C43 0 51 3.5 59 8 C59.5 35 53 55 35 69.5 C18 55 11.5 35 12 8.5 Z" fill="url(#silv)"/>
<path d="M15 10.5 C22 6.5 29 3.2 35 3.2 C42 3.2 49 6.2 56 10 C56.3 35 50.5 52 35 65 C19.5 52 14.5 35 15 10.5 Z" fill="#eef0f1"/>
<path d="M15 10.5 C22 6.5 29 3.2 35 3.2 L30 8.5 L40.3 16.6 L30 24.2 L40.3 31.7 L30 39.8 L40.3 48.5 L30 56.6 L37 63.5 L35 65 C19.5 52 14.5 35 15 10.5 Z" fill="url(#redg)"/>
</svg>
<div class="t" style="left:2872px;top:836.50px;font-size:34.6px;line-height:43px;color:#ffffff;font-weight:700;letter-spacing:0.65px;">OSHA 30-Hour Safety Certification</div>
<div class="t" style="left:2872px;top:886.68px;font-size:24px;line-height:30px;color:#9ca3af;letter-spacing:-0.43px;">OSHA</div>
<div class="b" style="left:3646px;top:833px;width:100px;height:46px;background:rgba(20,83,45,0.45);border:2px solid #166534;border-radius:25px;"></div>
<div class="t" style="left:3698px;transform:translateX(-50%);top:841.68px;font-size:24px;line-height:30px;color:#4ade80;">Active</div>
<div class="t" style="left:2776px;top:954.15px;font-size:28.4px;line-height:36px;color:#d1d5db;letter-spacing:0.13px;">Comprehensive workplace safety certification</div>
<div class="t" style="left:2776px;top:1022.58px;font-size:24.3px;line-height:30px;color:#9ca3af;">Issue Date:</div>
<div class="t" style="right:88.19999999999982px;top:1022.68px;font-size:24px;line-height:30px;color:#d1d5db;letter-spacing:1.8px;">6/20/23</div>
<div class="t" style="left:2776px;top:1070.58px;font-size:24.3px;line-height:30px;color:#9ca3af;">Expiry Date:</div>
<div class="t" style="right:88.19999999999982px;top:1070.68px;font-size:24px;line-height:30px;color:#d1d5db;letter-spacing:1.8px;">6/20/25</div>
<div class="t" style="left:2776px;top:1118.58px;font-size:24.3px;line-height:30px;color:#9ca3af;">Credential ID:</div>
<div class="t mono" style="right:90px;top:1120.61px;font-size:24px;line-height:30px;color:#d1d5db;">OSHA-30-2023-456</div>
<div class="t" style="left:2776px;top:1166.58px;font-size:24.3px;line-height:30px;color:#9ca3af;">Points Earned:</div>
<div class="t" style="right:88.19999999999982px;top:1166.68px;font-size:24px;line-height:30px;color:#d1d5db;letter-spacing:1.8px;">300</div>
<div class="b" style="left:2778px;top:1232px;width:152px;height:47px;background:rgba(30,58,138,0.5);border:2px solid #1e40af;border-radius:8px;"></div>
<div class="t" style="left:2856.0px;transform:translateX(-50%);top:1240.90px;font-size:24.8px;line-height:31px;color:#60a5fa;">Renewable</div>
<div class="b" style="left:2950px;top:1232px;width:257px;height:47px;background:rgba(20,83,45,0.5);border:2px solid #166534;border-radius:8px;"></div>
<div class="t" style="left:3080.5px;transform:translateX(-50%);top:1240.90px;font-size:24.8px;line-height:31px;color:#4ade80;">Industry Recognized</div>
<div class="b" style="left:2778px;top:1316px;width:431px;height:72px;background:#374151;border-radius:10px;"></div>
<svg class="ic" style="left:2921.1484375px;top:1339.0px;width:26px;height:26px;" viewBox="0 0 24 24"><path fill="#ffffff" d="M5 20h14v-2H5v2zM19 9h-4V3H9v6H5l7 7 7-7z"/></svg>
<div class="t" style="left:2959.1484375px;top:1334.68px;font-size:24px;line-height:30px;color:#ffffff;">Download</div>
<div class="b" style="left:3226px;top:1316px;width:431px;height:72px;background:#374151;border-radius:10px;"></div>
<svg class="ic" style="left:3392.484375px;top:1339.0px;width:26px;height:26px;" viewBox="0 0 24 24"><path fill="#ffffff" d="M12 1L3 5v6c0 5.55 3.84 10.74 9 12 5.16-1.26 9-6.45 9-12V5l-9-4zm-2 16l-4-4 1.41-1.41L10 14.17l6.59-6.59L18 9l-8 8z"/></svg>
<div class="t" style="left:3430.484375px;top:1334.68px;font-size:24px;line-height:30px;color:#ffffff;">Verify</div>
<div class="b" style="left:3675px;top:1316px;width:75px;height:72px;background:#374151;border-radius:10px;"></div>
<svg class="ic" style="left:3698.5px;top:1338.0px;width:28px;height:28px;" viewBox="0 0 24 24"><path fill="#ffffff" d="M18 16.08c-.76 0-1.44.3-1.96.77L8.91 12.7c.05-.23.09-.46.09-.7s-.04-.47-.09-.7l7.05-4.11c.54.5 1.25.81 2.04.81 1.66 0 3-1.34 3-3s-1.34-3-3-3-3 1.34-3 3c0 .24.04.47.09.7L8.04 9.81C7.5 9.31 6.79 9 6 9c-1.66 0-3 1.34-3 3s1.34 3 3 3c.79 0 1.5-.31 2.04-.81l7.12 4.16c-.05.21-.08.43-.08.65 0 1.61 1.31 2.92 2.92 2.92 1.61 0 2.92-1.31 2.92-2.92s-1.31-2.92-2.92-2.92z"/></svg>
<div class="b" style="left:560px;top:1462px;width:1052px;height:640px;background:#1f2937;border:2px solid #374151;border-radius:16px;"></div>
<svg class="ic" style="left:602px;top:1512px;width:70px;height:70px;overflow:visible" viewBox="0 0 70 70">
<rect x="5.3" y="0" width="59.7" height="70" fill="#e9eef5"/>
<path d="M5 5H65M5 10H65M5 15H65M5 20H65M5 25H65M5 30H65M5 35H65M5 40H65M5 45H65M5 50H65M5 55H65M5 60H65M5 65H65M10 0V70M15 0V70M20 0V70M25 0V70M30 0V70M35 0V70M40 0V70M45 0V70M50 0V70M55 0V70M60 0V70" stroke="#cfd8e6" stroke-width="0.5"/>
<rect x="9.1" y="25.3" width="13" height="44.7" fill="#0bbf16"/>
<rect x="28.5" y="38" width="13.3" height="32" fill="#bf0a0a"/>
<rect x="48.2" y="10" width="13" height="60" fill="#1459c4"/>
</svg>
<div class="t" style="left:696px;top:1508.50px;font-size:34.6px;line-height:43px;color:#ffffff;font-weight:700;letter-spacing:0.11px;">Project Management Professional (PMP)</div>
<div class="t" style="left:696px;top:1558.68px;font-size:24px;line-height:30px;color:#9ca3af;letter-spacing:0.39px;">Project Management Institute</div>
<div class="b" style="left:1470px;top:1505px;width:100px;height:46px;background:rgba(20,83,45,0.45);border:2px solid #166534;border-radius:25px;"></div>
<div class="t" style="left:1522px;transform:translateX(-50%);top:1513.68px;font-size:24px;line-height:30px;color:#4ade80;">Active</div>
<div class="t" style="left:600px;top:1626.15px;font-size:28.4px;line-height:36px;color:#d1d5db;letter-spacing:0.1px;">Global project management certification</div>
<div class="t" style="left:600px;top:1694.58px;font-size:24.3px;line-height:30px;color:#9ca3af;">Issue Date:</div>
<div class="t" style="right:2264.2px;top:1694.68px;font-size:24px;line-height:30px;color:#d1d5db;letter-spacing:1.8px;">3/10/23</div>
<div class="t" style="left:600px;top:1742.58px;font-size:24.3px;line-height:30px;color:#9ca3af;">Expiry Date:</div>
<div class="t" style="right:2264.2px;top:1742.68px;font-size:24px;line-height:30px;color:#d1d5db;letter-spacing:1.8px;">3/10/26</div>
<div class="t" style="left:600px;top:1790.58px;font-size:24.3px;line-height:30px;color:#9ca3af;">Credential ID:</div>
<div class="t mono" style="right:2266px;top:1792.61px;font-size:24px;line-height:30px;color:#d1d5db;">PMI-PMP-2023-789</div>
<div class="t" style="left:600px;top:1838.58px;font-size:24.3px;line-height:30px;color:#9ca3af;">Points Earned:</div>
<div class="t" style="right:2264.2px;top:1838.68px;font-size:24px;line-height:30px;color:#d1d5db;letter-spacing:1.8px;">750</div>
<div class="b" style="left:602px;top:1904px;width:152px;height:47px;background:rgba(30,58,138,0.5);border:2px solid #1e40af;border-radius:8px;"></div>
<div class="t" style="left:680.0px;transform:translateX(-50%);top:1912.90px;font-size:24.8px;line-height:31px;color:#60a5fa;">Renewable</div>
<div class="b" style="left:774px;top:1904px;width:257px;height:47px;background:rgba(20,83,45,0.5);border:2px solid #166534;border-radius:8px;"></div>
<div class="t" style="left:904.5px;transform:translateX(-50%);top:1912.90px;font-size:24.8px;line-height:31px;color:#4ade80;">Industry Recognized</div>
<div class="b" style="left:1051px;top:1904px;width:241px;height:47px;background:rgba(88,28,135,0.5);border:2px solid #7e22ce;border-radius:8px;"></div>
<div class="t" style="left:1173.5px;transform:translateX(-50%);top:1912.90px;font-size:24.8px;line-height:31px;color:#c084fc;">Blockchain Verified</div>
<div class="b" style="left:602px;top:1988px;width:431px;height:72px;background:#374151;border-radius:10px;"></div>
<svg class="ic" style="left:745.1484375px;top:2011.0px;width:26px;height:26px;" viewBox="0 0 24 24"><path fill="#ffffff" d="M5 20h14v-2H5v2zM19 9h-4V3H9v6H5l7 7 7-7z"/></svg>
<div class="t" style="left:783.1484375px;top:2006.68px;font-size:24px;line-height:30px;color:#ffffff;">Download</div>
<div class="b" style="left:1050px;top:1988px;width:431px;height:72px;background:#374151;border-radius:10px;"></div>
<svg class="ic" style="left:1216.484375px;top:2011.0px;width:26px;height:26px;" viewBox="0 0 24 24"><path fill="#ffffff" d="M12 1L3 5v6c0 5.55 3.84 10.74 9 12 5.16-1.26 9-6.45 9-12V5l-9-4zm-2 16l-4-4 1.41-1.41L10 14.17l6.59-6.59L18 9l-8 8z"/></svg>
<div class="t" style="left:1254.484375px;top:2006.68px;font-size:24px;line-height:30px;color:#ffffff;">Verify</div>
<div class="b" style="left:1499px;top:1988px;width:75px;height:72px;background:#374151;border-radius:10px;"></div>
<svg class="ic" style="left:1522.5px;top:2010.0px;width:28px;height:28px;" viewBox="0 0 24 24"><path fill="#ffffff" d="M18 16.08c-.76 0-1.44.3-1.96.77L8.91 12.7c.05-.23.09-.46.09-.7s-.04-.47-.09-.7l7.05-4.11c.54.5 1.25.81 2.04.81 1.66 0 3-1.34 3-3s-1.34-3-3-3-3 1.34-3 3c0 .24.04.47.09.7L8.04 9.81C7.5 9.31 6.79 9 6 9c-1.66 0-3 1.34-3 3s1.34 3 3 3c.79 0 1.5-.31 2.04-.81l7.12 4.16c-.05.21-.08.43-.08.65 0 1.61 1.31 2.92 2.92 2.92 1.61 0 2.92-1.31 2.92-2.92s-1.31-2.92-2.92-2.92z"/></svg>
<div class="b" style="left:1648px;top:1462px;width:1052px;height:640px;background:#1f2937;border:2px solid #374151;border-radius:16px;"></div>
<svg class="ic" style="left:1690px;top:1512px;width:70px;height:70px;overflow:visible" viewBox="0 0 70 70">
<rect x="1.5" y="14.6" width="13" height="55" fill="#d2d3d3"/>
<rect x="54.9" y="14.6" width="13.9" height="55" fill="#d2d3d3"/>
<rect x="1" y="14" width="14" height="3" fill="#7b7d80"/>
<rect x="54.5" y="14" width="15" height="3" fill="#7b7d80"/>
<rect x="13.7" y="2" width="41.7" height="67.7" fill="#e7e7e5"/>
<rect x="13" y="1.3" width="43" height="3.6" fill="#6e7072"/>
<path d="M30.2 12h8.7v10.1h10.8v9.3H38.9v10.2h-8.7V31.4H19.5v-9.3h10.7z" fill="#e0343c"/>
<path d="M33 15h3v9.9h10.8v3.6H36v10.2h-3V28.5H22.4v-3.6H33z" fill="#f3eeee"/>
<g fill="#5d7f91"><rect x="6.5" y="22.7" width="4" height="5.8"/><rect x="6.5" y="31.7" width="4" height="5.8"/><rect x="6.5" y="40.7" width="4" height="5.8"/><rect x="6.5" y="49.4" width="4" height="5.8"/><rect x="6.5" y="58.1" width="4" height="5.8"/>
<rect x="59.2" y="22.7" width="4" height="5.8"/><rect x="59.2" y="31.7" width="4" height="5.8"/><rect x="59.2" y="40.7" width="4" height="5.8"/><rect x="59.2" y="49.4" width="4" height="5.8"/><rect x="59.2" y="58.1" width="4" height="5.8"/></g>
<rect x="19.5" y="49.7" width="31.3" height="4.3" fill="#5e6062"/>
<rect x="23" y="54" width="25" height="15.7" fill="#3f6a86"/>
<path d="M31 54V70M39.5 54V70" stroke="#c8cdd0" stroke-width="1"/>
</svg>
<div class="t" style="left:1784px;top:1508.50px;font-size:34.6px;line-height:43px;color:#ffffff;font-weight:700;letter-spacing:0.24px;">HIPAA Compliance Certification</div>
<div class="t" style="left:1784px;top:1558.68px;font-size:24px;line-height:30px;color:#9ca3af;letter-spacing:0.4px;">Healthcare Compliance Institute</div>
<div class="b" style="left:2545px;top:1505px;width:113px;height:46px;background:rgba(127,29,29,0.5);border:2px solid #991b1b;border-radius:25px;"></div>
<div class="t" style="left:2603.5px;transform:translateX(-50%);top:1513.68px;font-size:24px;line-height:30px;color:#f87171;">Expired</div>
<div class="t" style="left:1688px;top:1626.15px;font-size:28.4px;line-height:36px;color:#d1d5db;letter-spacing:0.17px;">Healthcare privacy and security certification</div>
<div class="t" style="left:1688px;top:1694.58px;font-size:24.3px;line-height:30px;color:#9ca3af;">Issue Date:</div>
<div class="t" style="right:1176.1999999999998px;top:1694.68px;font-size:24px;line-height:30px;color:#d1d5db;letter-spacing:1.8px;">11/1/22</div>
<div class="t" style="left:1688px;top:1742.58px;font-size:24.3px;line-height:30px;color:#9ca3af;">Expiry Date:</div>
<div class="t" style="right:1176.1999999999998px;top:1742.68px;font-size:24px;line-height:30px;color:#d1d5db;letter-spacing:1.8px;">11/1/24</div>
<div class="t" style="left:1688px;top:1790.58px;font-size:24.3px;line-height:30px;color:#9ca3af;">Credential ID:</div>
<div class="t mono" style="right:1178px;top:1792.61px;font-size:24px;line-height:30px;color:#d1d5db;">HCI-HIPAA-2022-321</div>
<div class="t" style="left:1688px;top:1838.58px;font-size:24.3px;line-height:30px;color:#9ca3af;">Points Earned:</div>
<div class="t" style="right:1176.1999999999998px;top:1838.68px;font-size:24px;line-height:30px;color:#d1d5db;letter-spacing:1.8px;">200</div>
<div class="b" style="left:1690px;top:1904px;width:152px;height:47px;background:rgba(30,58,138,0.5);border:2px solid #1e40af;border-radius:8px;"></div>
<div class="t" style="left:1768.0px;transform:translateX(-50%);top:1912.90px;font-size:24.8px;line-height:31px;color:#60a5fa;">Renewable</div>
<div class="b" style="left:1862px;top:1904px;width:257px;height:47px;background:rgba(20,83,45,0.5);border:2px solid #166534;border-radius:8px;"></div>
<div class="t" style="left:1992.5px;transform:translateX(-50%);top:1912.90px;font-size:24.8px;line-height:31px;color:#4ade80;">Industry Recognized</div>
<div class="b" style="left:1690px;top:1988px;width:282px;height:76px;background:#374151;border-radius:10px;"></div>
<svg class="ic" style="left:1758.6484375px;top:2013.0px;width:26px;height:26px;" viewBox="0 0 24 24"><path fill="#ffffff" d="M5 20h14v-2H5v2zM19 9h-4V3H9v6H5l7 7 7-7z"/></svg>
<div class="t" style="left:1796.6484375px;top:2008.68px;font-size:24px;line-height:30px;color:#ffffff;">Download</div>
<div class="b" style="left:1988px;top:1988px;width:280px;height:76px;background:#374151;border-radius:10px;"></div>
<svg class="ic" style="left:2078.984375px;top:2013.0px;width:26px;height:26px;" viewBox="0 0 24 24"><path fill="#ffffff" d="M12 1L3 5v6c0 5.55 3.84 10.74 9 12 5.16-1.26 9-6.45 9-12V5l-9-4zm-2 16l-4-4 1.41-1.41L10 14.17l6.59-6.59L18 9l-8 8z"/></svg>
<div class="t" style="left:2116.984375px;top:2008.68px;font-size:24px;line-height:30px;color:#ffffff;">Verify</div>
<div class="b" style="left:2284px;top:1988px;width:282px;height:72px;background:rgba(120,65,20,0.5);border:2px solid #92500e;border-radius:10px;"></div>
<svg class="ic" style="left:2370.65625px;top:2013.0px;width:26px;height:26px;" viewBox="0 0 24 24"><path fill="#facc15" d="M17.65 6.35C16.2 4.9 14.21 4 12 4c-4.42 0-7.99 3.58-7.99 8s3.57 8 7.99 8c3.73 0 6.84-2.55 7.73-6h-2.08c-.82 2.33-3.04 4-5.65 4-3.31 0-6-2.69-6-6s2.69-6 6-6c1.66 0 3.14.69 4.22 1.78L13 11h7V4l-2.35 2.35z"/></svg>
<div class="t" style="left:2408.65625px;top:2008.68px;font-size:24px;line-height:30px;color:#facc15;">Renew</div>
<div class="b" style="left:2587px;top:1988px;width:75px;height:76px;background:#374151;border-radius:10px;"></div>
<svg class="ic" style="left:2610.5px;top:2012.0px;width:28px;height:28px;" viewBox="0 0 24 24"><path fill="#ffffff" d="M18 16.08c-.76 0-1.44.3-1.96.77L8.91 12.7c.05-.23.09-.46.09-.7s-.04-.47-.09-.7l7.05-4.11c.54.5 1.25.81 2.04.81 1.66 0 3-1.34 3-3s-1.34-3-3-3-3 1.34-3 3c0 .24.04.47.09.7L8.04 9.81C7.5 9.31 6.79 9 6 9c-1.66 0-3 1.34-3 3s1.34 3 3 3c.79 0 1.5-.31 2.04-.81l7.12 4.16c-.05.21-.08.43-.08.65 0 1.61 1.31 2.92 2.92 2.92 1.61 0 2.92-1.31 2.92-2.92s-1.31-2.92-2.92-2.92z"/></svg>
</body></html>
